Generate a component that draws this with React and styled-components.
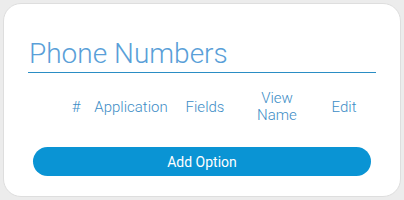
import React from "react";
import styled, { createGlobalStyle } from "styled-components";

const GlobalStyle = createGlobalStyle`
  html, body {
    margin: 0;
    padding: 0;
    background: #ececec;
    font-family: Roboto, "Liberation Sans", sans-serif;
  }
`;

const Card = styled.div`
  box-sizing: border-box;
  margin: 3px;
  height: 194px;
  background: #fff;
  border: 1px solid #dedede;
  border-radius: 18px;
  padding: 32px 24px 0;
  display: flex;
  flex-direction: column;
`;

const Title = styled.h2`
  margin: 0;
  padding: 0 0 1px 1px;
  font-family: "Roboto Light", Roboto, "Liberation Sans", sans-serif;
  font-size: 28px;
  line-height: 35px;
  font-weight: 300;
  color: #5a9fd8;
  border-bottom: 1px solid #2a8dc4;
`;

const HeaderRow = styled.div`
  display: flex;
  align-items: center;
  margin-top: 17px;
  height: 34px;
`;

const HeadCell = styled.div`
  width: ${(p) => p.w}px;
  text-align: center;
  font-family: "Roboto Light", Roboto, "Liberation Sans", sans-serif;
  font-size: 15px;
  line-height: 17px;
  font-weight: 300;
  color: #3d8dc6;
`;

const AddButton = styled.button`
  margin: 23px 5px 0;
  height: 29px;
  border: none;
  border-radius: 15px;
  background: #0a94d4;
  color: #fff;
  font-family: Roboto, "Liberation Sans", sans-serif;
  font-size: 14px;
  cursor: pointer;
`;

const columns = [
  { label: "", w: 36 },
  { label: "#", w: 24 },
  { label: "Application", w: 86 },
  { label: "Fields", w: 62 },
  { label: "View Name", w: 82 },
  { label: "Edit", w: 52 },
];

export default function App() {
  return (
    <>
      <GlobalStyle />
      <Card>
        <Title>Phone Numbers</Title>
        <HeaderRow>
          {columns.map((c, i) => (
            <HeadCell key={i} w={c.w}>
              {c.label === "View Name" ? (
                <>
                  View
                  <br />
                  Name
                </>
              ) : (
                c.label
              )}
            </HeadCell>
          ))}
        </HeaderRow>
        <AddButton>Add Option</AddButton>
      </Card>
    </>
  );
}
